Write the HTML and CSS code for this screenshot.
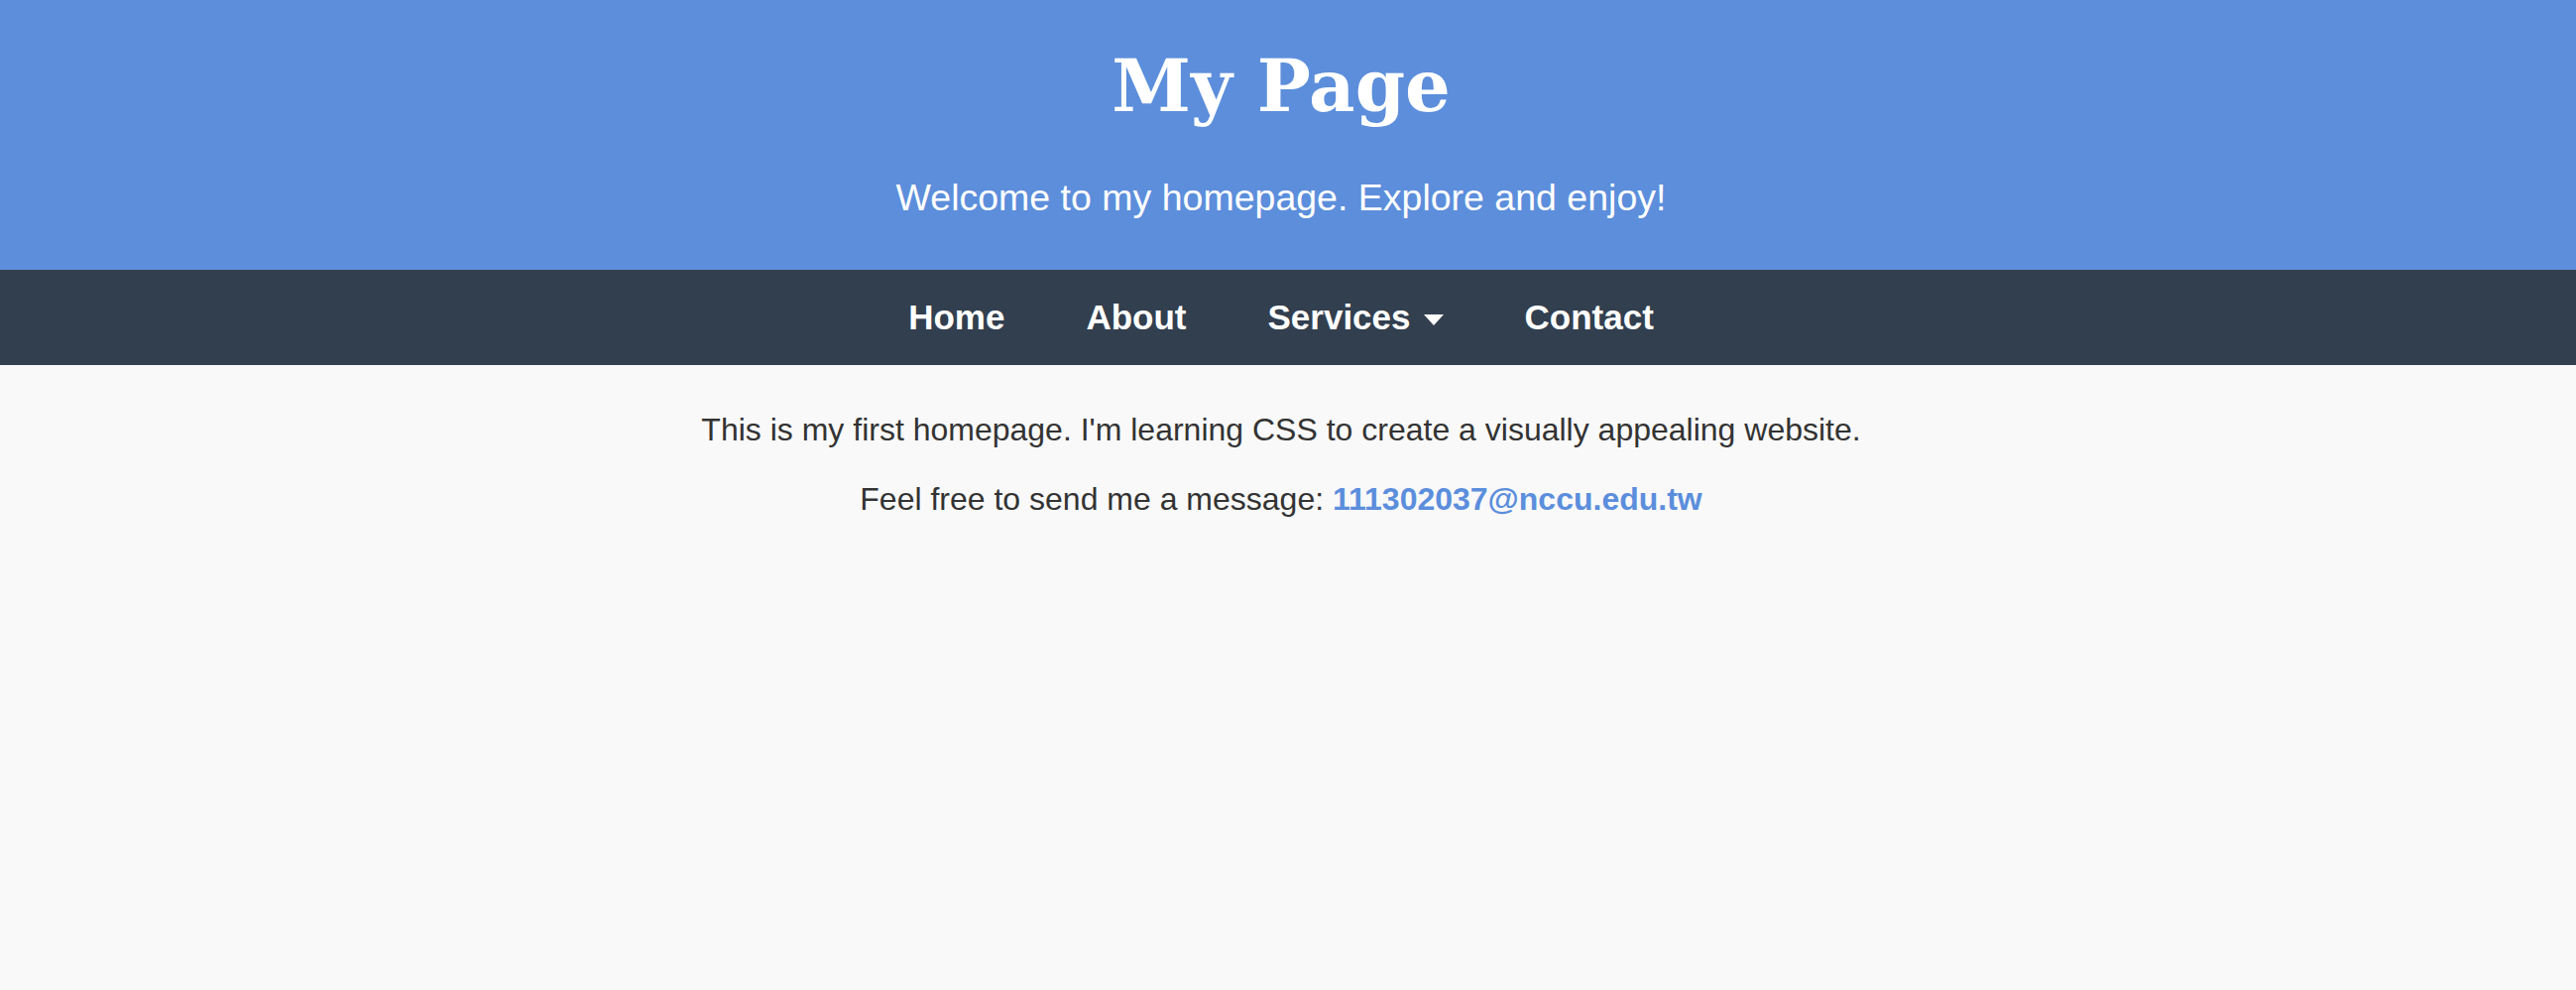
FILE: index.html
```html
<!DOCTYPE html>
<html lang="en">
<head>
<meta charset="utf-8">
<title>My Page</title>
<link rel="stylesheet" href="styles.css">
</head>
<body>
<header class="site-header">
  <h1 class="site-title">My Page</h1>
  <p class="site-tagline">Welcome to my homepage. Explore and enjoy!</p>
</header>
<nav class="site-nav">
  <a class="nav-link" href="#">Home</a>
  <a class="nav-link" href="#">About</a>
  <a class="nav-link" href="#">Services <span class="caret"></span></a>
  <a class="nav-link" href="#">Contact</a>
</nav>
<main class="content">
  <p class="text">This is my first homepage. I'm learning CSS to create a visually appealing website.</p>
  <p class="text">Feel free to send me a message: <a class="mail" href="#">111302037@nccu.edu.tw</a></p>
</main>
</body>
</html>
```

FILE: styles.css
```css
html, body {
  margin: 0;
  padding: 0;
}
body {
  background: #f9f9f9;
  font-family: "Liberation Sans", Arial, sans-serif;
  color: #333333;
}
.site-header {
  background: #5c8edb;
  color: #ffffff;
  text-align: center;
  padding: 39px 14px 52px 0;
}
.site-title {
  margin: 0 0 44px;
  font-family: "DejaVu Serif", Georgia, serif;
  font-weight: bold;
  font-size: 72px;
  line-height: 96px;
}
.site-tagline {
  margin: 0;
  font-size: 37.5px;
  line-height: 41px;
}
.site-nav {
  background: #323f4f;
  display: flex;
  justify-content: center;
  gap: 82px;
  height: 96px;
  padding-right: 14px;
}
.nav-link {
  color: #ffffff;
  text-decoration: none;
  font-weight: bold;
  font-size: 35px;
  line-height: 96px;
  display: flex;
  align-items: center;
}
.caret {
  display: inline-block;
  width: 0;
  height: 0;
  border-left: 10px solid transparent;
  border-right: 10px solid transparent;
  border-top: 11px solid #ffffff;
  margin-left: 13px;
  margin-top: 4px;
}
.content {
  text-align: center;
  padding: 14px 14px 0 0;
}
.text {
  margin: 32px 0;
  font-size: 32px;
  line-height: 38px;
}
.mail {
  color: #5b8edc;
  font-weight: bold;
  text-decoration: none;
}
```
